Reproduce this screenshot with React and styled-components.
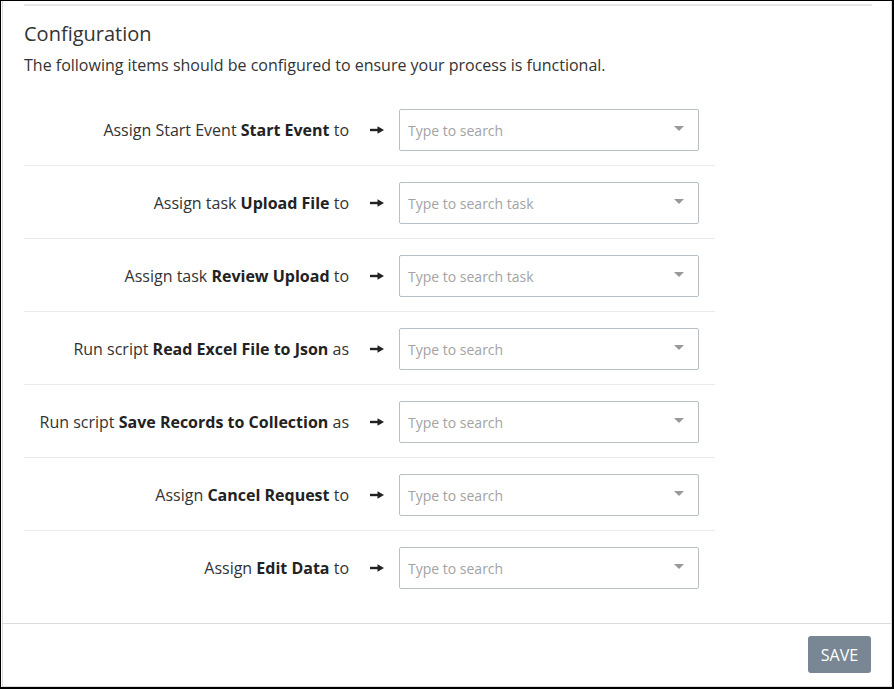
import React from "react";
import styled, { createGlobalStyle } from "styled-components";

const GlobalStyle = createGlobalStyle`
	html, body {
		margin: 0;
		padding: 0;
		background: #fff;
	}
	* {
		box-sizing: border-box;
	}
`;

// --------------------------------------------------

const Frame = styled.div`
	height: 689px;
	border-style: solid;
	border-color: #000;
	border-width: 1px 2px 2px 1px;
	background: #fff;
	font-family: "Open Sans", "Liberation Sans", sans-serif;
	color: #333;
`;

const Modal = styled.div`
	height: 100%;
	margin-left: 1px;
	border: 1px solid #dcdcdc;
	border-top: 0;
	display: flex;
	flex-direction: column;
`;

const Body = styled.div`
	flex: 1;
	padding: 3px 19px 0 21px;
`;

const Rule = styled.div`
	height: 2px;
	background: #e6e6e6;
`;

const Title = styled.h4`
	margin: 16px 0 0;
	font-size: 20px;
	font-weight: 400;
	line-height: 24px;
	color: #333;
`;

const Lead = styled.p`
	margin: 9px 0 0;
	font-size: 16px;
	line-height: 21px;
	color: #333;
`;

const List = styled.div`
	margin-top: 17px;
	width: 691px;
`;

const Row = styled.div`
	display: grid;
	grid-template-columns: 1fr 50px 300px;
	align-items: center;
	padding: 16px 16px 14px 0;
	border-bottom: 1px solid ${ p => p.last ? "transparent" : "#e9ecef" };
`;

const Label = styled.div`
	text-align: right;
	font-size: 16px;
	line-height: 21px;
	color: #333;

	b {
		font-weight: 700;
		color: #222;
	}
`;

const ArrowCell = styled.div`
	display: flex;
	justify-content: center;
	padding-left: 4px;
`;

const Select = styled.div`
	height: 42px;
	border: 1px solid #b8c0c7;
	border-radius: 2px;
	display: flex;
	align-items: center;
	padding: 0 14px 0 8px;
	background: #fff;
`;

const Placeholder = styled.span`
	flex: 1;
	font-size: 14px;
	color: #a3a3a3;
`;

const Caret = styled.span`
	width: 0;
	height: 0;
	border-left: 5px solid transparent;
	border-right: 5px solid transparent;
	border-top: 5px solid #999;
	margin-top: -4px;
`;

const Footer = styled.div`
	border-top: 1px solid #dcdcdc;
	padding: 12px 20px 13px 0;
	display: flex;
	justify-content: flex-end;
`;

const SaveButton = styled.button`
	width: 63px;
	height: 37px;
	border: 0;
	border-radius: 3px;
	background: #788793;
	color: #fff;
	font-family: "Open Sans", "Liberation Sans", sans-serif;
	font-size: 16px;
	padding: 0;
	cursor: pointer;
`;

// --------------------------------------------------

const Arrow = () =>
	<svg width = "15" height = "10" viewBox = "0 0 15 10">
		<path d = "M1 5H10" stroke = "#222" strokeWidth = "2.4" />
		<path d = "M8.5 1.2L15 5L8.5 8.8Z" fill = "#222" />
	</svg>;

const items = [
	{ pre: "Assign Start Event", name: "Start Event", post: "to", hint: "Type to search" },
	{ pre: "Assign task", name: "Upload File", post: "to", hint: "Type to search task" },
	{ pre: "Assign task", name: "Review Upload", post: "to", hint: "Type to search task" },
	{ pre: "Run script", name: "Read Excel File to Json", post: "as", hint: "Type to search" },
	{ pre: "Run script", name: "Save Records to Collection", post: "as", hint: "Type to search" },
	{ pre: "Assign", name: "Cancel Request", post: "to", hint: "Type to search" },
	{ pre: "Assign", name: "Edit Data", post: "to", hint: "Type to search" },
];

export default function App() {
	return (
		<>
			<GlobalStyle />
			<Frame>
				<Modal>
					<Body>
						<Rule />
						<Title>Configuration</Title>
						<Lead>The following items should be configured to ensure your process is functional.</Lead>
						<List>
							{ items.map((it, i) =>
								<Row key = { it.name } last = { i === items.length - 1 }>
									<Label>
										{ it.pre } <b>{ it.name }</b> { it.post }
									</Label>
									<ArrowCell><Arrow /></ArrowCell>
									<Select>
										<Placeholder>{ it.hint }</Placeholder>
										<Caret />
									</Select>
								</Row>,
							) }
						</List>
					</Body>
					<Footer>
						<SaveButton>SAVE</SaveButton>
					</Footer>
				</Modal>
			</Frame>
		</>
	);
}
